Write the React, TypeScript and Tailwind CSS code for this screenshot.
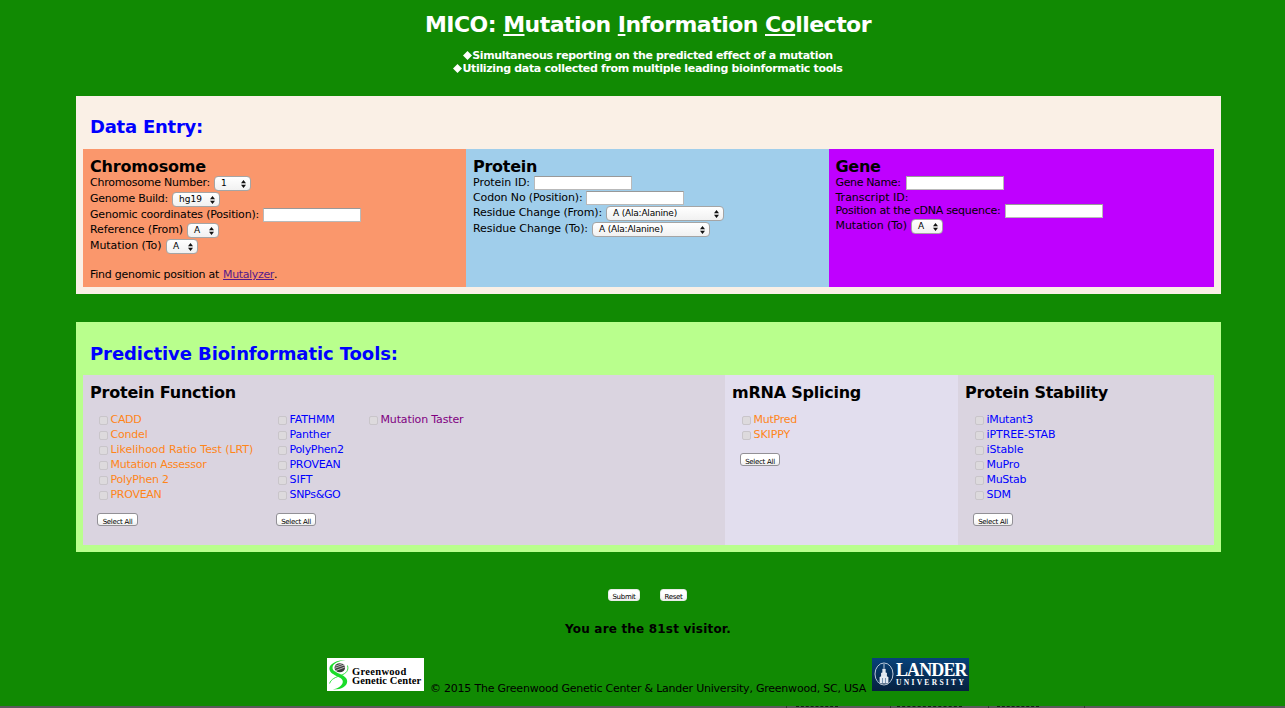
import type { ReactNode } from 'react';

function Select({ value, className, text = '' }: { value: string; className: string; text?: string }) {
  return (
    <span className={`mt-px flex h-[15px] shrink-0 items-center justify-between rounded-[4px] border border-[#a5a5a5] bg-linear-to-b from-white to-[#f1f1f1] pr-[4px] pl-[6px] text-[9px] leading-[13px] ${className}`}>
      <span className={text}>{value}</span>
      <svg className="h-[8px] w-[5px] shrink-0" viewBox="0 0 5 8" fill="#111">
        <path d="M2.5 0 5 3.3H0zM2.5 8 0 4.7h5z" />
      </svg>
    </span>
  );
}

function Input() {
  return <input className="mt-px h-[14px] w-[98px] shrink-0 border border-[#b9b9b9] border-t-[#999] bg-white px-1 text-[9px] outline-none" />;
}

function Row({ label, box, h, children }: { label: string; box: string; h: string; children?: ReactNode }) {
  return (
    <div className={`flex items-start ${h}`}>
      <span className={`shrink-0 pt-px text-[11px] leading-[14px] whitespace-nowrap ${box}`}>{label}</span>
      {children}
    </div>
  );
}

function Heading({ children, className }: { children: ReactNode; className: string }) {
  return <h3 className={`pt-px text-[16px] leading-[16px] font-bold whitespace-nowrap ${className}`}>{children}</h3>;
}

function SmallButton({ label, className }: { label: string; className: string }) {
  return (
    <button className={`flex items-end justify-center rounded-[3px] border bg-linear-to-b from-white via-white to-[#eeeeee] text-[7px] leading-[6px] tracking-[-0.28px] whitespace-nowrap ${className}`}>
      {label}
    </button>
  );
}

type Tool = [name: string, tracking: string];

function ToolList({ tools, color, className, button }: { tools: Tool[]; color: string; className: string; button?: string }) {
  return (
    <div className={`shrink-0 ${className}`}>
      {tools.map(([name, tracking]) => (
        <label key={name} className={`flex h-[15px] items-start gap-[2.5px] pl-[2px] text-[11px] leading-[15px] whitespace-nowrap ${color}`}>
          <span className="mt-[4px] size-[9px] shrink-0 rounded-[2px] border border-[#c9c5ca] bg-[#dddadd]" />
          <span className={tracking}>{name}</span>
        </label>
      ))}
      {button && <SmallButton label="Select All" className={`mt-[11px] h-[13px] border-[#929096] ${button}`} />}
    </div>
  );
}

const orangeTools: Tool[] = [
  ['CADD', 'tracking-[-0.3px]'],
  ['Condel', 'tracking-[-0.2px]'],
  ['Likelihood Ratio Test (LRT)', 'tracking-[-0.05px]'],
  ['Mutation Assessor', 'tracking-[-0.27px]'],
  ['PolyPhen 2', 'tracking-[-0.2px]'],
  ['PROVEAN', 'tracking-[-0.28px]'],
];

const blueTools: Tool[] = [
  ['FATHMM', 'tracking-[-0.15px]'],
  ['Panther', 'tracking-[-0.2px]'],
  ['PolyPhen2', 'tracking-[-0.3px]'],
  ['PROVEAN', 'tracking-[-0.28px]'],
  ['SIFT', 'tracking-normal'],
  ['SNPs&GO', 'tracking-[-0.31px]'],
];

const splicingTools: Tool[] = [
  ['MutPred', 'tracking-[-0.25px]'],
  ['SKIPPY', 'tracking-[-0.1px]'],
];

const stabilityTools: Tool[] = [
  ['iMutant3', 'tracking-[-0.3px]'],
  ['iPTREE-STAB', 'tracking-[-0.08px]'],
  ['iStable', 'tracking-[-0.15px]'],
  ['MuPro', 'tracking-[-0.2px]'],
  ['MuStab', 'tracking-[-0.3px]'],
  ['SDM', 'tracking-[-0.2px]'],
];

function GreenwoodLogo() {
  return (
    <div className="flex h-[33px] w-[97px] shrink-0 items-center bg-white">
      <svg className="h-[33px] w-[24px] shrink-0" viewBox="0 0 24 33">
        <path d="M18.500 2C9 2.200 2.600 6 2.400 10.500c-.1 4 4.600 6.400 8.600 8.200 3.800 1.800 5.500 3.600 4.600 6.300-.9 2.900-4.600 5.300-9.600 6.500 8.500.2 14-3.400 14.200-8 .1-4-4.200-6-8.200-8C8.500 13.800 5 12.500 5.600 9 6.200 5.500 11.500 3 18.500 2z" fill="#1bdc2a" />
        <path d="M20.500 7.500c1.500 5-1.500 8-6.300 9.700C8.500 19.300 4 21 2.600 25.500" fill="none" stroke="#1bdc2a" strokeWidth=".9" />
        <ellipse cx="12.800" cy="9.700" rx="5.300" ry="4.500" fill="#3c3c3c" />
        <path d="m8.500 8.200 7-2.600M7.500 10.400l10-3.500M8.500 12.600l9.300-3.500" stroke="#d8d8d8" strokeWidth=".8" />
      </svg>
      <div className="pt-[3px] pl-px font-['Liberation_Serif',serif] text-[10.500px] leading-[9px] font-bold whitespace-nowrap">
        <div className="tracking-[0.32px]">Greenwood</div>
        <div className="tracking-[0.1px]">Genetic Center</div>
      </div>
    </div>
  );
}

function LanderLogo() {
  return (
    <div className="flex h-[33px] w-[97px] shrink-0 items-center bg-linear-to-b from-[#07427a] to-[#06203f] text-white">
      <svg className="h-[33px] w-[23px] shrink-0" viewBox="0 0 23 33" fill="none" stroke="#e8eef5">
        <ellipse cx="12" cy="16" rx="9" ry="11" strokeWidth=".8" />
        <path d="M12 6v4m-1.200 1h2.400v4h-2.400zM9.500 15h5v4h-5zM8 19h8v6H8z" fill="#dfe7f0" strokeWidth=".8" />
        <path d="M10.500 20v5m3-5v5M6 22v3m12-3v3" stroke="#4d7397" strokeWidth=".7" />
      </svg>
      <div className="pl-px font-['Liberation_Serif',serif] whitespace-nowrap">
        <div className="text-[18px] leading-[17px] font-bold tracking-[-0.900px]">LANDER</div>
        <div className="text-[7.500px] leading-[8px] font-bold tracking-[2.300px]">UNIVERSITY</div>
      </div>
    </div>
  );
}

export default function App() {
  return (
    <div className="flex h-[708px] w-[1285px] flex-col overflow-hidden bg-[#118a03] font-['DejaVu_Sans',sans-serif] text-black">
      <div className="ml-[76px] flex h-[706px] w-[1145px] shrink-0 flex-col pt-[10px]">
        <header className="flex h-[86px] shrink-0 flex-col items-center pr-px font-bold whitespace-nowrap text-white">
          <h1 className="h-[39px] pt-px text-[22px] leading-[28px] tracking-[-0.534px]">
            MICO: <u>M</u>utation <u>I</u>nformation <u>Co</u>llector
          </h1>
          {[
            ['Simultaneous reporting on the predicted effect of a mutation', 'tracking-[-0.35px]'],
            ['Utilizing data collected from multiple leading bioinformatic tools', 'tracking-[-0.34px]'],
          ].map(([text, tracking]) => (
            <div key={text} className="flex h-[13px] items-center text-[11px] leading-[13px]">
              <svg className="size-[9px]" viewBox="0 0 8 8" fill="white">
                <path d="M4 0 8 4 4 8 0 4z" />
              </svg>
              <span className={tracking}>{text}</span>
            </div>
          ))}
        </header>

        <section className="h-[198px] shrink-0 bg-[#faf0e6] px-[7px] pt-[19px]">
          <h2 className="h-[34px] pl-[7px] text-[18px] leading-[24px] font-bold tracking-[-0.24px] text-[#0000ff]">Data Entry:</h2>
          <div className="flex h-[138px]">
            <div className="w-[383px] bg-[#fa976c] pt-[9px] pl-[7px]">
              <Heading className="h-[17px] tracking-[-0.17px]">Chromosome</Heading>
              <Row label="Chromosome Number:" h="h-[16px]" box="w-[124px] tracking-[-0.236px]">
                <Select value="1" className="w-[37px]" />
              </Row>
              <Row label="Genome Build:" h="h-[16px]" box="w-[82px] tracking-[-0.254px]">
                <Select value="hg19" className="w-[48px]" />
              </Row>
              <Row label="Genomic coordinates (Position):" h="h-[15px]" box="w-[173px] tracking-[-0.204px]">
                <Input />
              </Row>
              <Row label="Reference (From)" h="h-[16px]" box="w-[97px] tracking-[-0.108px]">
                <Select value="A" className="w-[32px]" />
              </Row>
              <Row label="Mutation (To)" h="h-[29px]" box="w-[76px] tracking-[-0.058px]">
                <Select value="A" className="w-[32px]" />
              </Row>
              <p className="flex pt-px text-[11px] leading-[14px] whitespace-nowrap">
                <span className="w-[133px] tracking-[-0.247px]">Find genomic position at</span>
                <a className="w-[51px] tracking-[-0.35px] text-[#551a8b] underline">Mutalyzer</a>.
              </p>
            </div>

            <div className="w-[363px] bg-[#a0ceeb] pt-[9px] pl-[7px]">
              <Heading className="h-[17px] tracking-[-0.28px]">Protein</Heading>
              <Row label="Protein ID:" h="h-[15px]" box="w-[61px] tracking-[-0.044px]">
                <Input />
              </Row>
              <Row label="Codon No (Position):" h="h-[15px]" box="w-[113px] tracking-[-0.134px]">
                <Input />
              </Row>
              <Row label="Residue Change (From):" h="h-[16px]" box="w-[133px] tracking-[-0.14px]">
                <Select value="A (Ala:Alanine)" className="w-[118px]" text="tracking-[-0.19px]" />
              </Row>
              <Row label="Residue Change (To):" h="h-[16px]" box="w-[119px] tracking-[-0.07px]">
                <Select value="A (Ala:Alanine)" className="w-[118px]" text="tracking-[-0.19px]" />
              </Row>
            </div>

            <div className="w-[385px] bg-[#bf00ff] pt-[9px] pl-[6.500px]">
              <Heading className="h-[17px] tracking-[-0.3px]">Gene</Heading>
              <Row label="Gene Name:" h="h-[15px]" box="w-[70px] tracking-[-0.369px]">
                <Input />
              </Row>
              <Row label="Transcript ID:" h="h-[13px]" box="tracking-normal" />
              <Row label="Position at the cDNA sequence:" h="h-[15px]" box="w-[169.500px] tracking-[-0.264px]">
                <Input />
              </Row>
              <Row label="Mutation (To)" h="h-[15px]" box="w-[75.500px] tracking-[-0.058px]">
                <Select value="A" className="w-[32px]" />
              </Row>
            </div>
          </div>
        </section>

        <section className="mt-[28px] h-[230px] shrink-0 bg-[#b9ff8d] px-[7px] pt-[20px]">
          <h2 className="h-[33px] pl-[7px] text-[18px] leading-[24px] font-bold tracking-[-0.085px] text-[#0000ff]">Predictive Bioinformatic Tools:</h2>
          <div className="flex h-[170px]">
            <div className="w-[642px] bg-[#dad4e0] pt-[9px] pl-[7px]">
              <Heading className="h-[28px] tracking-[-0.217px]">Protein Function</Heading>
              <div className="flex pl-[7px]">
                <ToolList tools={orangeTools} color="text-[#ff8519]" className="w-[179px]" button="w-[41px]" />
                <ToolList tools={blueTools} color="text-[#0000ff]" className="w-[91px]" button="w-[40px]" />
                <ToolList tools={[['Mutation Taster', 'tracking-[-0.14px]']]} color="text-[#800080]" className="w-[110px]" />
              </div>
            </div>
            <div className="w-[233px] bg-[#e2deee] pt-[9px] pl-[7px]">
              <Heading className="h-[28px] tracking-[-0.238px]">mRNA Splicing</Heading>
              <ToolList tools={splicingTools} color="text-[#ff8519]" className="ml-[8px]" button="w-[40px]" />
            </div>
            <div className="w-[256px] bg-[#dad4e0] pt-[9px] pl-[7px]">
              <Heading className="h-[28px] tracking-[-0.266px]">Protein Stability</Heading>
              <ToolList tools={stabilityTools} color="text-[#0000ff]" className="ml-[8px]" button="w-[40px]" />
            </div>
          </div>
        </section>

        <div className="mt-[37px] flex h-[33px] shrink-0 items-start gap-[20px] pl-[532px]">
          <SmallButton label="Submit" className="h-[12px] w-[32px] border-[#e8ece8]" />
          <SmallButton label="Reset" className="h-[12px] w-[27px] border-[#e8ece8]" />
        </div>
        <p className="h-[36px] shrink-0 pr-px text-center text-[12px] leading-[14px] font-bold tracking-[0.19px]">You are the 81st visitor.</p>

        <footer className="flex shrink-0 items-start pl-[251px]">
          <GreenwoodLogo />
          <p className="mt-[24px] ml-[6px] w-[442px] text-[11px] leading-[14px] tracking-[-0.226px] whitespace-nowrap">
            © 2015 The Greenwood Genetic Center &amp; Lander University, Greenwood, SC, USA
          </p>
          <LanderLogo />
        </footer>
      </div>

      <div className="flex h-[2px] shrink-0 bg-[#5a5a5a] pl-[786px]">
        <div className="w-[104px] border-l border-[#333] pl-[9px]">
          <div className="mr-auto w-[42px] border-t border-dashed border-[#1c1c1c]" />
        </div>
        <div className="w-[98px] border-l border-[#333] pl-[6px]">
          <div className="w-[65px] border-t border-dashed border-[#1c1c1c]" />
        </div>
        <div className="w-[97px] border-x border-[#333] pl-[8px]">
          <div className="w-[42px] border-t border-dashed border-[#1c1c1c]" />
        </div>
      </div>
    </div>
  );
}
